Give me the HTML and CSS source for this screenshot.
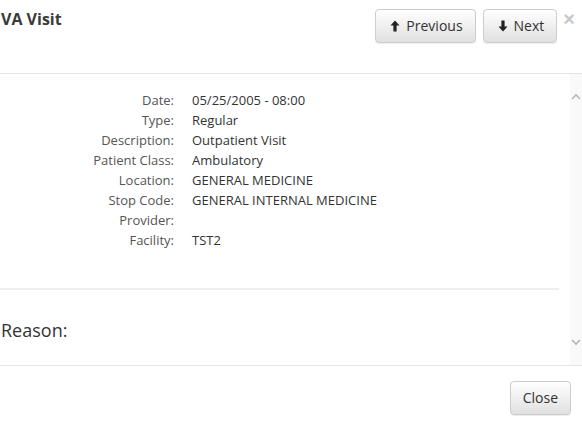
FILE: index.html
```html
<!DOCTYPE html>
<html>
<head>
<meta charset="utf-8">
<link rel="stylesheet" href="styles.css">
</head>
<body>
<div class="modal">
  <div class="modal-header">
    <h4 class="title">VA Visit</h4>
    <div class="nav-buttons">
      <button class="btn"><svg class="ico" viewBox="0 0 14 14"><path d="M7 1.5 L11.5 6.5 L8.6 6.5 L8.6 12.5 L5.4 12.5 L5.4 6.5 L2.5 6.5 Z"/></svg>Previous</button>
      <button class="btn"><svg class="ico" viewBox="0 0 14 14"><path d="M7 12.5 L11.5 7.5 L8.6 7.5 L8.6 1.5 L5.4 1.5 L5.4 7.5 L2.5 7.5 Z"/></svg>Next</button>
    </div>
    <span class="close">×</span>
  </div>
  <div class="modal-body">
    <div class="content">
      <dl class="details">
        <dt>Date:</dt><dd>05/25/2005 - 08:00</dd>
        <dt>Type:</dt><dd>Regular</dd>
        <dt>Description:</dt><dd>Outpatient Visit</dd>
        <dt>Patient Class:</dt><dd>Ambulatory</dd>
        <dt>Location:</dt><dd>GENERAL MEDICINE</dd>
        <dt>Stop Code:</dt><dd>GENERAL INTERNAL MEDICINE</dd>
        <dt>Provider:</dt><dd></dd>
        <dt>Facility:</dt><dd>TST2</dd>
      </dl>
      <hr class="sep">
      <div class="reason">Reason:</div>
    </div>
    <div class="scrollbar">
      <svg class="chev" viewBox="0 0 10 7"><path d="M1 6 L5 2 L9 6" /></svg>
      <svg class="chev" viewBox="0 0 10 7"><path d="M1 1 L5 5 L9 1" /></svg>
    </div>
  </div>
  <div class="modal-footer">
    <button class="btn">Close</button>
  </div>
</div>
</body>
</html>
```
FILE: styles.css
```css
html, body {
  margin: 0;
  padding: 0;
  background: #fff;
}
body {
  font-family: "Open Sans", "Liberation Sans", sans-serif;
  color: #333;
  width: 582px;
  height: 422px;
  overflow: hidden;
}
.modal {
  display: flex;
  flex-direction: column;
}
.modal-header {
  height: 74px;
  box-sizing: border-box;
  padding: 9px 7px 0 1px;
  display: flex;
  align-items: flex-start;
  border-bottom: 1px solid #e5e5e5;
}
.title {
  flex: 1;
  margin: 0;
  font-size: 16px;
  line-height: 20px;
  font-weight: 700;
  color: #3a3a3a;
}
.nav-buttons {
  display: flex;
  gap: 7px;
}
.btn {
  display: inline-flex;
  align-items: center;
  height: 34px;
  box-sizing: border-box;
  padding: 0 12px;
  font-family: "Open Sans", "Liberation Sans", sans-serif;
  font-size: 14px;
  line-height: 20px;
  color: #333;
  background: linear-gradient(to bottom, #fff 0%, #e0e0e0 100%);
  border: 1px solid #ccc;
  border-radius: 4px;
  box-shadow: inset 0 1px 0 rgba(255,255,255,.15), 0 1px 1px rgba(0,0,0,.075);
}
.ico {
  width: 14px;
  height: 14px;
  margin-right: 4px;
  fill: #222;
}
.close {
  margin-left: 6px;
  margin-top: 0;
  font-size: 20px;
  line-height: 20px;
  font-weight: 700;
  color: #c8c8c8;
  font-family: "Liberation Sans", sans-serif;
}
.modal-body {
  height: 291px;
  display: flex;
}
.content {
  flex: 1;
  margin-right: 11px;
  padding-top: 16px;
}
.details {
  margin: 0;
  display: grid;
  grid-template-columns: 174px 1fr;
  column-gap: 18px;
  font-size: 13px;
  line-height: 20px;
}
.details dt {
  text-align: right;
  color: #555;
}
.details dd {
  margin: 0;
  color: #333;
  min-height: 20px;
}
.sep {
  margin: 38px 0 0;
  border: 0;
  border-top: 2px solid #eee;
  height: 0;
}
.reason {
  margin-top: 27px;
  padding-left: 1px;
  font-size: 18px;
  line-height: 26px;
  color: #333;
}
.scrollbar {
  width: 12px;
  background: #f9f9f9;
  display: flex;
  flex-direction: column;
  justify-content: space-between;
  align-items: center;
  padding: 19px 0 19px;
  box-sizing: border-box;
}
.chev {
  width: 10px;
  height: 7px;
  fill: none;
  stroke: #b5b5b5;
  stroke-width: 1.6;
}
.modal-footer {
  border-top: 1px solid #e5e5e5;
  padding: 15px 11px 0 0;
  display: flex;
  justify-content: flex-end;
}
```
